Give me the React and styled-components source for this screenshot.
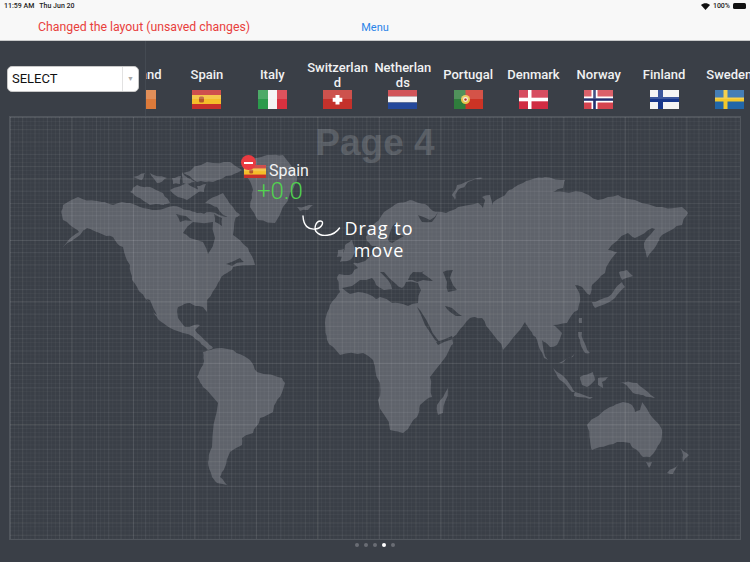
import styled, { createGlobalStyle } from "styled-components";

const GlobalStyle = createGlobalStyle`
  html, body {
    margin: 0;
    padding: 0;
    background: #3a3f47;
  }
  * {
    box-sizing: border-box;
  }
`;

const countries = [
  { name: "Ireland", flag: "ie" },
  { name: "Spain", flag: "es" },
  { name: "Italy", flag: "it" },
  { name: "Switzerland", flag: "ch" },
  { name: "Netherlands", flag: "nl" },
  { name: "Portugal", flag: "pt" },
  { name: "Denmark", flag: "dk" },
  { name: "Norway", flag: "no" },
  { name: "Finland", flag: "fi" },
  { name: "Sweden", flag: "se" },
];

const land = [
  // north america
  "62,215 63,205 78,197 97,201 113,205 122,202 140,207 157,210 173,206 187,210 197,213 210,212 227,217 238,213 233,235 248,248 255,265 233,267 227,273 218,283 207,300 207,312 203,307 190,303 178,307 178,318 185,327 200,325 195,330 208,343 213,348 208,350 200,342 183,333 163,323 155,315 147,300 137,287 132,280 130,265 123,247 113,237 97,232 87,228 80,235 63,247 79,232 70,225 63,220",
  // greenland, iceland
  "245,160 267,155 283,155 297,175 290,193 275,223 258,220 250,207 253,190 245,173",
  "297,207 313,205 308,210 300,211",
  // arctic islands
  "183,173 207,162 230,162 242,170 226,176 213,182 197,182",
  "205,203 223,193 233,207 240,215 230,220 217,207",
  "130,192 137,185 150,187 163,193 170,203 150,205 137,197",
  "133,177 145,173 142,180",
  "150,173 167,178 157,183",
  "170,190 187,183 200,190 187,200 175,195",
  "182,172 195,182 183,183",
  "172,178 181,176 180,184 173,184",
  "197,186 206,184 204,192 198,192",
  "150,196 166,199 164,205 152,204",
  // south america
  "203,352 213,349 233,350 250,360 257,372 282,378 285,383 277,400 273,412 260,418 253,433 242,438 242,445 230,452 225,467 220,477 227,485 217,483 212,477 208,463 212,447 218,403 203,387 197,377 203,365",
  // eurasia and africa
  "337,279 339,274 352,274 358,268 353,263 362,262 371,255 376,246 372,246 367,241 366,237 372,226 384,212 398,203 410,200 425,204 433,211 446,213 458,207 478,203 483,208 485,200 482,197 490,195 492,205 496,200 507,192 518,185 530,180 545,177 565,180 563,188 553,192 582,192 598,200 618,195 635,200 662,207 682,207 688,213 682,225 662,235 658,242 647,258 644,243 655,229 652,228 635,238 628,233 608,250 617,252 605,273 592,285 590,295 582,287 575,285 580,297 578,310 567,323 553,325 562,333 557,345 550,347 542,340 548,360 544,358 537,340 530,330 525,322 503,350 492,333 482,318 470,318 466,322 452,338 453,344 450,348 430,377 432,397 420,405 417,417 403,433 390,430 378,400 380,383 373,360 363,353 340,355 327,340 325,323 330,305 340,292",
  // british isles
  "345,245 352,240 355,252 350,260 340,262",
  "338,250 344,249 343,257 337,257",
  // madagascar, novaya zemlya, japan
  "448,388 443,413 438,415 437,405",
  "483,178 468,182 458,190 455,200 452,195 457,185 472,180",
  "619,272 627,270 633,276 626,278 622,280",
  "622,282 625,287 615,298 595,308 592,302 608,297",
  // south east asia
  "579,318 582,318 582,323 579,323",
  "578,332 582,332 583,340 590,353 585,353 580,340",
  "553,368 567,380 575,392 572,392 560,380",
  "575,392 593,397 590,399 574,396",
  "580,377 593,372 595,380 587,387 582,385",
  "598,378 608,377 602,382 603,388 598,385",
  "559,363 575,353 573,357 562,363",
  "620,382 637,383 648,392 655,398 643,395 633,393 628,387",
  // australia and new zealand
  "587,425 610,407 623,402 632,405 635,412 640,410 642,402 652,417 662,430 660,443 650,457 643,457 633,448 630,443 617,442 600,447 592,450 590,440",
  "646,462 652,462 649,468",
  "680,448 689,455 683,462 683,455",
  "680,463 673,474 667,473",
];

const water = [
  // hudson bay
  "183,233 193,222 213,222 215,238 208,254 203,242 190,238",
  // channels in the north of canada
  "176,214 186,216 192,221 180,222",
  "214,214 222,218 222,226 215,222",
  // gulf of california, st lawrence
  "147,299 150,300 157,315 153,312",
  "226,264 240,258 244,262 232,266",
  // mediterranean
  "342,288 352,286 360,280 372,278 376,285 384,290 392,289 388,280 380,272 384,272 396,284 402,288 406,282 418,283 421,290 418,303 408,306 398,303 392,303 380,297 376,299 368,294 358,292 350,294",
  // black sea, caspian
  "408,280 413,272 427,270 422,273 433,281 423,280 417,282",
  "443,272 453,270 450,278 457,290 448,292 447,282",
  // red sea, aden, persian gulf
  "417,307 420,310 430,327 438,340 440,344 435,340 425,325",
  "436,342 452,336 453,339 438,345",
  "445,306 452,308 462,316 456,316 449,311",
  // baltic, white sea
  "392,227 398,222 396,232 404,236 392,243 388,240",
  "418,215 430,220 438,212 432,222 422,222",
];

// splits each coast edge and nudges the new point so the outlines aren't straight
function roughen(points, rounds = 2) {
  let pts = points.split(" ").map((p) => p.split(",").map(Number));
  let seed = pts.length * 7 + 3;
  const next = () => {
    seed = (seed * 9301 + 49297) % 233280;
    return seed / 233280 - 0.5;
  };
  for (let r = 0; r < rounds; r++) {
    const out = [];
    pts.forEach((a, i) => {
      const b = pts[(i + 1) % pts.length];
      const len = Math.hypot(b[0] - a[0], b[1] - a[1]);
      out.push(a);
      if (len > 4) {
        const amount = Math.min(len * 0.22, 3);
        out.push([(a[0] + b[0]) / 2 + next() * amount, (a[1] + b[1]) / 2 + next() * amount]);
      }
    });
    pts = out;
  }
  return pts.map((p) => `${p[0].toFixed(1)},${p[1].toFixed(1)}`).join(" ");
}

function Gloss() {
  return <rect width="29" height="9" fill="#fff" opacity="0.16" />;
}

function FlagArt({ code }) {
  switch (code) {
    case "ie":
      return (
        <>
          <rect width="10" height="19" fill="#2f9e4f" />
          <rect x="10" width="9" height="19" fill="#f3efe8" />
          <rect x="19" width="10" height="19" fill="#dc7a3a" />
        </>
      );
    case "es":
      return (
        <>
          <rect width="29" height="19" fill="#c62f2b" />
          <rect y="5" width="29" height="9" fill="#f4bd2a" />
          <rect x="7" y="6.5" width="5" height="6" rx="1.5" fill="#b5562a" />
        </>
      );
    case "it":
      return (
        <>
          <rect width="10" height="19" fill="#2b9a4c" />
          <rect x="10" width="9" height="19" fill="#f3f3f3" />
          <rect x="19" width="10" height="19" fill="#d7313f" />
        </>
      );
    case "ch":
      return (
        <>
          <rect width="29" height="19" fill="#c4312b" />
          <rect x="12.5" y="5" width="4" height="9.5" fill="#fff" />
          <rect x="9.7" y="7.8" width="9.6" height="4" fill="#fff" />
        </>
      );
    case "nl":
      return (
        <>
          <rect width="29" height="6.5" fill="#c9343a" />
          <rect y="6.5" width="29" height="6" fill="#f5f5f5" />
          <rect y="12.5" width="29" height="6.5" fill="#24489b" />
        </>
      );
    case "pt":
      return (
        <>
          <rect width="29" height="19" fill="#cc3325" />
          <rect width="11.5" height="19" fill="#2f7d3c" />
          <circle cx="11.5" cy="9.5" r="4.5" fill="#e6c34a" />
          <circle cx="11.5" cy="9.5" r="2.4" fill="#f2ede0" />
          <circle cx="11.5" cy="9.5" r="1.2" fill="#b3322a" />
        </>
      );
    case "dk":
      return (
        <>
          <rect width="29" height="19" fill="#d02c42" />
          <rect x="9" width="3.5" height="19" fill="#fff" />
          <rect y="7.7" width="29" height="3.6" fill="#fff" />
        </>
      );
    case "no":
      return (
        <>
          <rect width="29" height="19" fill="#d4434e" />
          <rect x="7.5" width="6" height="19" fill="#fff" />
          <rect y="6.5" width="29" height="6" fill="#fff" />
          <rect x="9.2" width="2.6" height="19" fill="#232f6e" />
          <rect y="8.2" width="29" height="2.6" fill="#232f6e" />
        </>
      );
    case "fi":
      return (
        <>
          <rect width="29" height="19" fill="#f4f4f4" />
          <rect x="8" width="5" height="19" fill="#17378b" />
          <rect y="7" width="29" height="5" fill="#17378b" />
        </>
      );
    default:
      return (
        <>
          <rect width="29" height="19" fill="#2166a8" />
          <rect x="8.5" width="4" height="19" fill="#f2c72b" />
          <rect y="7.5" width="29" height="4" fill="#f2c72b" />
        </>
      );
  }
}

function Flag({ code, width = 29, height = 19 }) {
  return (
    <svg width={width} height={height} viewBox="0 0 29 19" preserveAspectRatio="none">
      <FlagArt code={code} />
      <Gloss />
    </svg>
  );
}

export default function App() {
  return (
    <>
      <GlobalStyle />
      <Page>
        <Header>
          <StatusBar>
            <span>11:59 AM&nbsp;&nbsp; Thu Jun 20</span>
            <StatusRight>
              <svg width="9" height="7" viewBox="0 0 18 14">
                <path d="M9 14 L0 4 C5 -1 13 -1 18 4 Z" fill="#111" />
              </svg>
              <span>100%</span>
              <Battery />
            </StatusRight>
          </StatusBar>
          <NavBar>
            <Unsaved>Changed the layout (unsaved changes)</Unsaved>
            <MenuLink>Menu</MenuLink>
          </NavBar>
        </Header>

        <Ribbon>
          <SelectWrap>
            <SelectBox>
              <SelectLabel>SELECT</SelectLabel>
              <SelectArrow>▼</SelectArrow>
            </SelectBox>
          </SelectWrap>
          <Strip>
            <StripRow>
              {countries.map((c) => (
                <Country key={c.name}>
                  <CountryName>{c.name}</CountryName>
                  <Flag code={c.flag} />
                </Country>
              ))}
            </StripRow>
          </Strip>
        </Ribbon>

        <Canvas>
          <MapArt viewBox="9 116 732 424">
            {land.map((points) => (
              <polygon key={points} points={roughen(points)} fill="#5f636b" />
            ))}
            {water.map((points) => (
              <polygon key={points} points={roughen(points, 1)} fill="#3a3f47" />
            ))}
          </MapArt>
          <PageTitle>Page 4</PageTitle>
          <Pin>
            <PinHead>
              <Flag code="es" width={22} height={13} />
              <PinName>Spain</PinName>
              <RemoveBadge />
            </PinHead>
            <PinValue>+0.0</PinValue>
          </Pin>
          <Curl viewBox="0 0 44 28">
            <path
              d="M1 1 C1.5 11 6.5 15 13.5 14 C20.5 13 22.5 6 18.5 6 C13.5 6 11.5 14 14.5 17 C18.5 22 31.5 22 37.5 13"
              fill="none"
              stroke="#fff"
              strokeWidth="1.4"
              strokeLinecap="round"
            />
          </Curl>
          <Hint>
            Drag to
            <br />
            move
          </Hint>
        </Canvas>

        <Pager>
          {[0, 1, 2, 3, 4].map((i) => (
            <Dot key={i} $active={i === 3} />
          ))}
        </Pager>
      </Page>
    </>
  );
}

const Page = styled.div`
  width: 750px;
  height: 562px;
  overflow: hidden;
  display: flex;
  flex-direction: column;
  background: #3a3f47;
  font-family: Roboto, "Liberation Sans", sans-serif;
`;

const Header = styled.div`
  height: 41px;
  flex: none;
  background: #f8f8f8;
  border-bottom: 1px solid #c9cacb;
`;

const StatusBar = styled.div`
  height: 12px;
  padding: 0 4px;
  display: flex;
  justify-content: space-between;
  align-items: center;
  font-size: 7px;
  font-weight: 500;
  color: #222;
`;

const StatusRight = styled.div`
  display: flex;
  align-items: center;
  gap: 3px;
`;

const Battery = styled.div`
  width: 13px;
  height: 6px;
  border-radius: 1.5px;
  background: #111;
`;

const NavBar = styled.div`
  height: 28px;
  display: grid;
  grid-template-columns: 1fr auto 1fr;
  align-items: center;
  padding-top: 2px;
`;

const Unsaved = styled.div`
  padding-left: 38px;
  font-size: 12.3px;
  color: #e8403c;
  white-space: nowrap;
`;

const MenuLink = styled.div`
  font-size: 11px;
  color: #2a84e8;
`;

const Ribbon = styled.div`
  height: 75px;
  flex: none;
  display: flex;
`;

const SelectWrap = styled.div`
  width: 145px;
  flex: none;
  padding: 25px 0 0 7px;
`;

const SelectBox = styled.div`
  width: 132px;
  height: 26px;
  display: flex;
  align-items: stretch;
  background: #fff;
  border: 1px solid #c8c8c8;
  border-radius: 5px;
`;

const SelectLabel = styled.div`
  flex: 1;
  padding-left: 4px;
  line-height: 24px;
  font-size: 13px;
  color: #111;
`;

const SelectArrow = styled.div`
  width: 16px;
  border-left: 1px solid #e2e2e2;
  text-align: center;
  line-height: 24px;
  font-size: 7px;
  color: #a8a8a8;
`;

const Strip = styled.div`
  flex: 1;
  min-width: 0;
  overflow: hidden;
  border-left: 1px solid #444a52;
`;

const StripRow = styled.div`
  display: flex;
  margin-left: -37px;
  padding-top: 18px;
`;

const Country = styled.div`
  width: 65.3px;
  flex: none;
  display: flex;
  flex-direction: column;
  align-items: center;
`;

const CountryName = styled.div`
  width: 62px;
  height: 31px;
  display: flex;
  align-items: center;
  justify-content: center;
  text-align: center;
  font-size: 13px;
  font-weight: 500;
  line-height: 15px;
  color: #f0f1f2;
  word-break: break-all;
`;

const Canvas = styled.div`
  position: relative;
  height: 424px;
  flex: none;
  margin: 0 9px;
  border: 1px solid rgba(255, 255, 255, 0.12);
  text-align: center;

  &::after {
    content: "";
    position: absolute;
    inset: 0;
    pointer-events: none;
    background-image:
      linear-gradient(rgba(255, 255, 255, 0.05) 1px, transparent 1px),
      linear-gradient(90deg, rgba(255, 255, 255, 0.05) 1px, transparent 1px),
      linear-gradient(rgba(255, 255, 255, 0.045) 1px, transparent 1px),
      linear-gradient(90deg, rgba(255, 255, 255, 0.045) 1px, transparent 1px),
      linear-gradient(rgba(255, 255, 255, 0.03) 1px, transparent 1px),
      linear-gradient(90deg, rgba(255, 255, 255, 0.03) 1px, transparent 1px);
    background-size:
      61.5px 61.5px,
      61.5px 61.5px,
      12.3px 12.3px,
      12.3px 12.3px,
      4.1px 4.1px,
      4.1px 4.1px;
  }
`;

const MapArt = styled.svg`
  position: absolute;
  inset: -1px;
  width: 732px;
  height: 424px;
`;

const PageTitle = styled.div`
  position: relative;
  padding-top: 3px;
  font-family: "Liberation Sans", sans-serif;
  font-size: 37px;
  font-weight: 700;
  line-height: 46px;
  color: #575c63;
`;

const Pin = styled.div`
  position: absolute;
  left: 234px;
  top: 46px;
  z-index: 1;
  text-align: left;
`;

const PinHead = styled.div`
  position: relative;
  display: flex;
  align-items: center;
  gap: 3px;
`;

const PinName = styled.div`
  font-size: 16px;
  line-height: 16px;
  color: #f2f3f4;
`;

const RemoveBadge = styled.div`
  position: absolute;
  left: -3px;
  top: -8px;
  width: 15px;
  height: 15px;
  border-radius: 50%;
  background: #ea3b41;

  &::after {
    content: "";
    position: absolute;
    left: 3px;
    right: 3px;
    top: 6.5px;
    height: 2px;
    background: #fff;
  }
`;

const PinValue = styled.div`
  margin-left: 13px;
  font-size: 24px;
  font-weight: 300;
  line-height: 24px;
  color: #52d34f;
`;

const Curl = styled.svg`
  position: absolute;
  left: 292px;
  top: 98px;
  width: 44px;
  height: 28px;
  z-index: 1;
`;

const Hint = styled.div`
  position: absolute;
  left: 334px;
  top: 100px;
  width: 70px;
  z-index: 1;
  text-align: center;
  font-family: "Open Sans", sans-serif;
  font-size: 18px;
  font-weight: 400;
  line-height: 22px;
  letter-spacing: 1px;
  color: #fff;
`;

const Pager = styled.div`
  display: flex;
  justify-content: center;
  gap: 5px;
  padding-top: 3px;
`;

const Dot = styled.div`
  width: 4px;
  height: 4px;
  border-radius: 50%;
  background: ${(p) => (p.$active ? "#fff" : "#696d74")};
`;
